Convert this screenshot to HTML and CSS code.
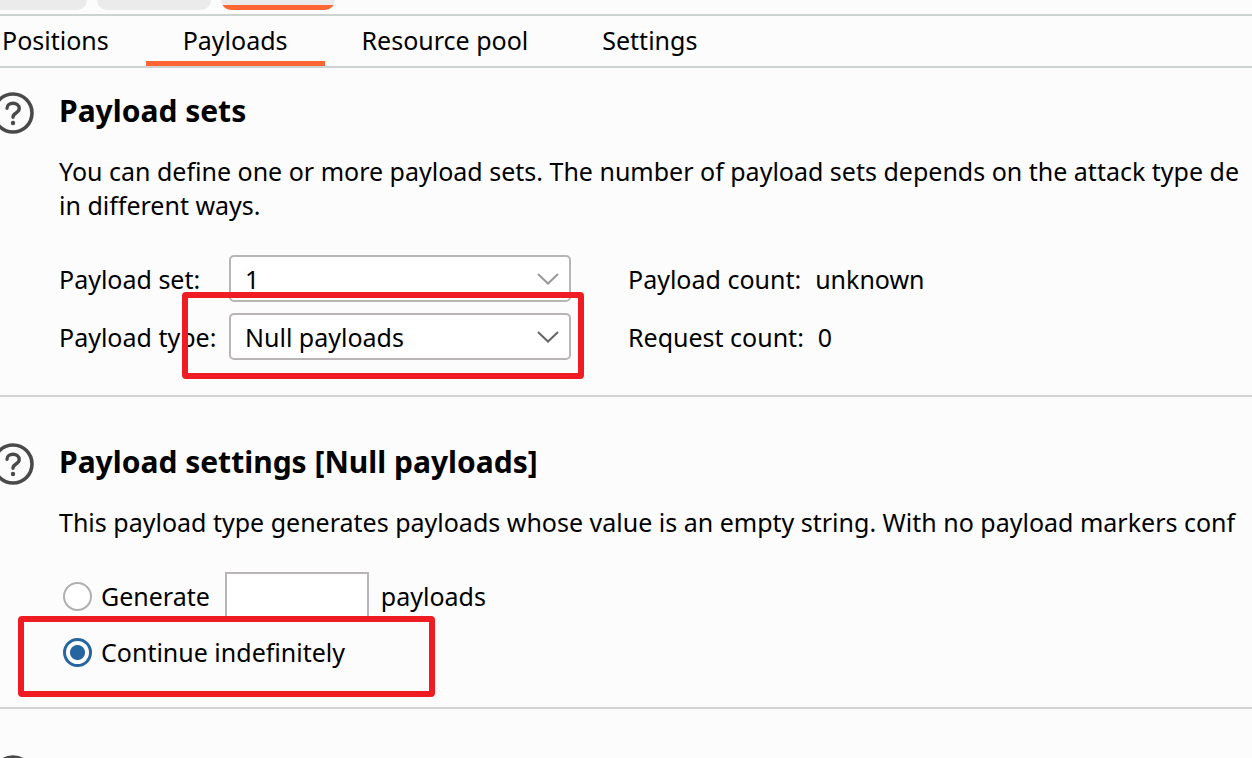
FILE: index.html
```
<!DOCTYPE html>
<html lang="en">
<head>
<meta charset="utf-8">
<title>Payloads</title>
<link rel="stylesheet" href="styles.css">
</head>
<body>
<svg class="symbols" aria-hidden="true">
  <symbol id="help" viewBox="0 0 42 42">
    <circle cx="21" cy="21" r="19" fill="none" stroke="currentColor" stroke-width="3.6"/>
    <path d="M15 16.2C15 13 17.8 11.2 21 11.2S27.2 13.3 27.2 16.6C27.2 21.4 21 20.6 21 25.2" fill="none" stroke="currentColor" stroke-width="3.4" stroke-linecap="round"/>
    <circle cx="21" cy="31" r="2.2" fill="currentColor"/>
  </symbol>
  <symbol id="chevron" viewBox="0 0 22 12">
    <path d="M1 1L11 10.5L21 1" fill="none" stroke="currentColor" stroke-width="2"/>
  </symbol>
</svg>
<div class="page">
  <div class="attack-tabs">
    <span class="attack-tab"></span>
    <span class="attack-tab"></span>
    <span class="attack-tab attack-tab-active"></span>
  </div>
  <nav class="tabs">
    <button class="tab" type="button">Positions</button>
    <button class="tab tab-active" type="button">Payloads</button>
    <button class="tab" type="button">Resource pool</button>
    <button class="tab" type="button">Settings</button>
  </nav>
  <main>
    <section class="section section-first">
      <button class="help" type="button" aria-label="Help: payload sets"><svg><use href="#help"/></svg></button>
      <div class="content">
        <h2>Payload sets</h2>
        <p>You can define one or more payload sets. The number of payload sets depends on the attack type de<br>in different ways.</p>
        <div class="sets">
          <label for="set">Payload set:</label>
          <div class="drop drop-muted">
            <select id="set"><option>1</option></select>
            <svg class="chevron"><use href="#chevron"/></svg>
          </div>
          <div class="count"><span>Payload count:</span><span>unknown</span></div>
          <label for="type">Payload type:</label>
          <div class="drop">
            <select id="type"><option>Null payloads</option></select>
            <svg class="chevron"><use href="#chevron"/></svg>
          </div>
          <div class="count"><span>Request count:</span><span>0</span></div>
          <div class="mark mark-type"></div>
        </div>
      </div>
    </section>
    <section class="section">
      <button class="help" type="button" aria-label="Help: payload settings"><svg><use href="#help"/></svg></button>
      <div class="content">
        <h2>Payload settings [Null payloads]</h2>
        <p>This payload type generates payloads whose value is an empty string. With no payload markers conf</p>
        <div class="choices">
          <div class="choice">
            <input type="radio" name="amount" id="generate">
            <label for="generate">Generate</label>
            <input class="number" type="text" id="number" aria-label="Number of payloads">
            <label for="number">payloads</label>
          </div>
          <div class="choice">
            <input type="radio" name="amount" id="continue" checked>
            <label for="continue">Continue indefinitely</label>
          </div>
          <div class="mark mark-continue"></div>
        </div>
      </div>
    </section>
    <section class="section">
      <button class="help" type="button" aria-label="Help"><svg><use href="#help"/></svg></button>
    </section>
  </main>
</div>
</body>
</html>
```
FILE: styles.css
```
* { box-sizing: border-box; }
body {
  margin: 0;
  background: #fcfcfc;
  color: #000;
  font: 25px/34px "Noto Sans", sans-serif;
}
button, input, select { font: inherit; color: inherit; }
.symbols { display: none; }
.page { height: 100vh; overflow: hidden; }

.attack-tabs {
  display: flex;
  gap: 10px;
  height: 16px;
  margin-left: -27px;
  border-bottom: 2px solid #cdd3d1;
}
.attack-tab {
  width: 114px;
  height: 10px;
  border-radius: 0 0 12px 12px;
  background: #ebebeb;
}
.attack-tab-active { background: linear-gradient(#ebebeb 5px, #ff6633 5px); }

.tabs {
  display: flex;
  margin-left: -35px;
  height: 52px;
  border-bottom: 2px solid #cdd3d1;
}
.tab {
  padding: 0 37px 2px;
  border: 0;
  border-top: 5px solid transparent;
  border-bottom: 5px solid transparent;
  background: none;
  white-space: nowrap;
}
.tab-active { border-bottom-color: #ff6633; }

.section {
  display: flex;
  gap: 25px;
  margin-left: -8px;
  padding: 46px 0 38px;
  border-bottom: 2px solid #d4d4d4;
}
.section-first { padding: 24px 0 35px; }
.help {
  flex: none;
  width: 42px;
  height: 42px;
  padding: 0;
  border: 0;
  background: none;
  color: #4a4a4a;
}
.help svg { display: block; width: 42px; height: 42px; }
.content { flex: 1; min-width: 0; }
h2 { margin: 0 0 24px; font-size: 30px; line-height: 38px; }
p { margin: 0 0 33px; white-space: nowrap; }

.sets {
  position: relative;
  display: grid;
  grid-template-columns: 170px 342px 1fr;
  row-gap: 11px;
  align-items: center;
  white-space: nowrap;
}
.drop { position: relative; color: #666; }
.drop-muted { color: #999; }
select {
  display: block;
  width: 100%;
  height: 47px;
  padding: 0 14px;
  border: 2px solid #b9b5b6;
  border-radius: 5px;
  background: #fff;
  color: #000;
  appearance: none;
}
.chevron {
  position: absolute;
  right: 12px;
  top: 18px;
  width: 22px;
  height: 12px;
  pointer-events: none;
}
.count { display: flex; gap: 14px; padding-left: 57px; }

.choices { position: relative; display: grid; gap: 15px; }
.choice { display: flex; align-items: center; padding-left: 4px; }
input[type="radio"] {
  width: 29px;
  height: 29px;
  margin: 0 9px 0 0;
  border: 2px solid #b0b0b0;
  border-radius: 50%;
  background: #fff;
  appearance: none;
}
input[type="radio"]:checked {
  border: 3px solid #2665a0;
  background: radial-gradient(circle, #2665a0 7px, #fff 8px);
}
.number {
  width: 144px;
  height: 48px;
  margin: 0 12px 0 15px;
  border: 2px solid #b9b5b6;
  background: #fff;
}

.mark {
  position: absolute;
  border: 6px solid #ef1c24;
  border-radius: 4px;
  pointer-events: none;
}
.mark-type { left: 123px; top: 37px; width: 402px; height: 87px; }
.mark-continue { left: -41px; top: 44px; width: 417px; height: 81px; }
```
